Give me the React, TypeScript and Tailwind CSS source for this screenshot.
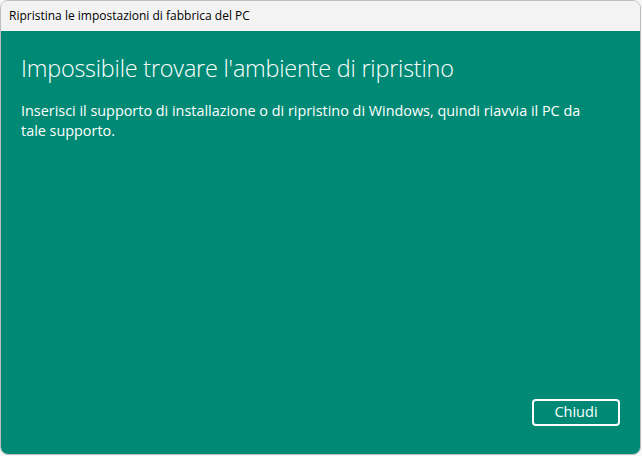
export default function App() {
  return (
    <div className="w-[642px] h-[456px] bg-[#f7f7f7] font-['Open_Sans','Liberation_Sans',sans-serif]">
      <div className="w-[641px] h-[455px] flex flex-col border border-[#bdbdbd] rounded-lg overflow-hidden">
        <div className="h-[30px] shrink-0 bg-[#f3f3f3] px-[8px] flex items-center text-[12px] text-black">
          Ripristina le impostazioni di fabbrica del PC
        </div>
        <div className="flex-1 bg-[#008a75] text-white flex flex-col px-[20px] pt-[21px] pb-[28px]">
          <h1 className="text-[23.4px] font-light leading-[32px] tracking-[-0.2px]">
            Impossibile trovare l'ambiente di ripristino
          </h1>
          <p className="mt-[17px] w-[575px] text-[14.4px] leading-[19.5px]">
            Inserisci il supporto di installazione o di ripristino di Windows, quindi riavvia il PC da tale supporto.
          </p>
          <div className="mt-auto flex justify-end">
            <button className="w-[88px] h-[27px] border-2 border-white rounded-[4px] text-[14.5px] leading-none">
              Chiudi
            </button>
          </div>
        </div>
      </div>
    </div>
  );
}
